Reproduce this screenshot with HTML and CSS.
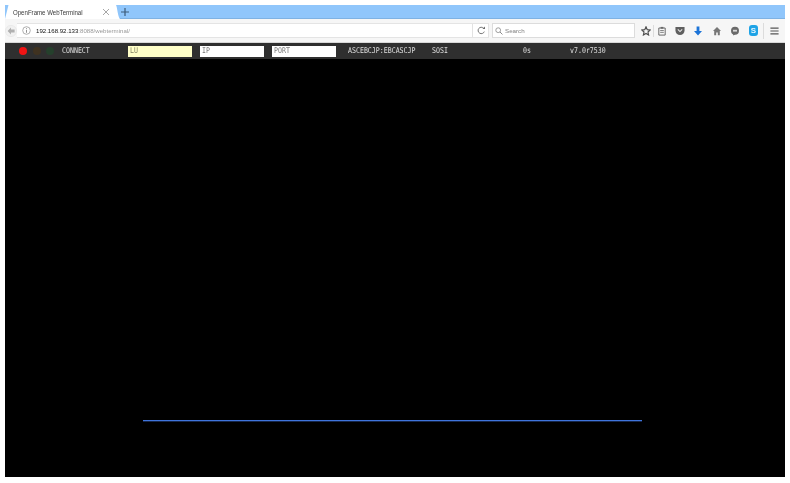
FILE: index.html
```html
<!DOCTYPE html>
<html lang="en">
<head>
<meta charset="utf-8">
<title>OpenFrame WebTerminal</title>
<link rel="stylesheet" href="styles.css">
</head>
<body>
<div class="window">
  <div class="tabbar">
    <svg class="tab-edge" width="4" height="14" viewBox="0 0 4 14"><path d="M0 14L3.5 0H0Z" fill="#90c6fb"/></svg>
    <div class="tab">
      <span class="tab-title">OpenFrame WebTerminal</span>
      <svg class="tab-close" width="8" height="8" viewBox="0 0 8 8"><path d="M1 1L7 7M7 1L1 7" stroke="#909090" stroke-width="0.8" fill="none"/></svg>
    </div>
    <svg class="tab-curve" width="5" height="14" viewBox="0 0 5 14"><path d="M0 0H1C2.5 3 2.5 11 5 14H0Z" fill="#fff"/></svg>
    <svg class="tab-new" width="8" height="8" viewBox="0 0 8 8"><path d="M4 0V8M0 4H8" stroke="#3d5a78" stroke-width="1.2" fill="none"/></svg>
  </div>
  <div class="toolbar">
    <svg class="back" width="12" height="12" viewBox="0 0 12 12"><circle cx="6" cy="6" r="5.6" fill="#f1f1f1" stroke="#e2e2e2" stroke-width="0.6"/><path d="M6 2.4L2.6 6L6 9.6V7.4H9.6V4.6H6Z" fill="#b0b0b0"/></svg>
    <div class="urlbar">
      <svg class="info" width="9" height="9" viewBox="0 0 9 9"><circle cx="4.5" cy="4.5" r="3.8" fill="none" stroke="#8c8c8c" stroke-width="0.7"/><path d="M4.5 2.2V3.1M4.5 3.9V6.8" stroke="#777" stroke-width="0.8"/></svg>
      <span class="url"><span class="url-host">192.168.92.133</span><span class="url-rest">:8088/webterminal/</span></span>
      <span class="url-divider"></span>
      <svg class="reload" width="9" height="9" viewBox="0 0 9 9"><path d="M7.3 5.6A3.2 3.2 0 1 1 6.6 2.2" fill="none" stroke="#666" stroke-width="0.9"/><path d="M5.4 3H8V0.6Z" fill="#666"/></svg>
    </div>
    <div class="searchbar">
      <svg width="8" height="8" viewBox="0 0 9 9"><circle cx="3.6" cy="3.6" r="2.7" fill="none" stroke="#888" stroke-width="0.9"/><path d="M5.6 5.6L8.4 8.4" stroke="#888" stroke-width="1.1"/></svg>
      <span class="search-text">Search</span>
    </div>
    <div class="tools">
      <svg class="tool-star" width="10" height="10" viewBox="0 0 12 12"><path d="M6 1L7.5 4.4L11 4.8L8.4 7.2L9.1 10.8L6 9L2.9 10.8L3.6 7.2L1 4.8L4.5 4.4Z" fill="none" stroke="#4f4f4f" stroke-width="1.4"/></svg>
      <span class="tool-sep"></span>
      <svg class="tool-clip" width="10" height="10" viewBox="0 0 10 11"><path d="M1.5 2.2H8.5V10H1.5Z" fill="none" stroke="#6a6a6a" stroke-width="1.1"/><path d="M3.5 1H6.5V3H3.5Z" fill="#6a6a6a"/><path d="M3 5H7M3 7H7" stroke="#6a6a6a" stroke-width="0.9"/></svg>
      <svg class="tool-pocket" width="12" height="10" viewBox="0 0 12 11"><path d="M1 1H11V5A5 5 0 0 1 1 5Z" fill="#5f5f5f"/><path d="M3.6 3.8L6 6.1L8.4 3.8" fill="none" stroke="#e8e8e8" stroke-width="1.2"/></svg>
      <svg class="tool-down" width="10" height="10" viewBox="0 0 10 10"><path d="M3.6 0.5H6.4V5H9L5 9.4L1 5H3.6Z" fill="#1c74d8"/></svg>
      <svg class="tool-home" width="10" height="10" viewBox="0 0 10 10"><path d="M5 1L9 5H7.8V9.2H5.8V6.4H4.2V9.2H2.2V5H1Z" fill="#777"/></svg>
      <svg class="tool-chat" width="10" height="10" viewBox="0 0 10 10"><circle cx="5" cy="4.8" r="4" fill="#6a6a6a"/><path d="M3 7.8L3.4 9.4L5.4 8.2Z" fill="#6a6a6a"/><path d="M3 3.8H7V5.6H3Z" fill="#d8d8d8"/></svg>
      <span class="tool-skype">S</span>
      <span class="tool-sep tool-sep-wide"></span>
      <svg class="tool-menu" width="9" height="8" viewBox="0 0 11 9"><path d="M0.5 1H10.5M0.5 4.5H10.5M0.5 8H10.5" stroke="#555" stroke-width="1.5"/></svg>
    </div>
  </div>
  <div class="termbar">
    <span class="lamp lamp-red"></span>
    <span class="lamp lamp-amber"></span>
    <span class="lamp lamp-green"></span>
    <span class="term-text connect">CONNECT</span>
    <span class="field field-lu"><span class="field-text">LU</span></span>
    <span class="field field-ip"><span class="field-text">IP</span></span>
    <span class="field field-port"><span class="field-text">PORT</span></span>
    <span class="term-text codepage">ASCEBCJP:EBCASCJP</span>
    <span class="term-text sosi">SOSI</span>
    <span class="term-text timer">0s</span>
    <span class="term-text version">v7.0r7530</span>
  </div>
  <div class="screen">
    <div class="cursor-line"></div>
  </div>
</div>
</body>
</html>
```

FILE: styles.css
```css
* { box-sizing: border-box; }
html, body { margin: 0; padding: 0; background: #fff; }
body { width: 790px; height: 483px; overflow: hidden; font-family: "Liberation Sans", Arial, sans-serif; }
.window { width: 780px; height: 472px; margin: 5px 0 0 5px; display: flex; flex-direction: column; }

.tabbar { height: 14px; background: #90c6fb; box-shadow: inset 0 -1px 0 #7fb2e3; display: flex; align-items: center; flex: none; }
.tab-edge { flex: none; background: #fff; }
.tab { width: 106px; height: 14px; background: #fff; display: flex; align-items: center; padding-left: 4px; flex: none; }
.tab-title { font-size: 7px; color: #3a3a3a; width: 89px; white-space: nowrap; transform: scaleX(0.87); transform-origin: left center; filter: blur(0.3px); }
.tab-close { flex: none; filter: blur(0.2px); }
.tab-curve { flex: none; }
.tab-new { margin-left: 1px; flex: none; filter: blur(0.2px); }

.toolbar { height: 24px; background: #f6f6f6; border-bottom: 1px solid #d8d8d8; display: flex; align-items: center; flex: none; }
.toolbar svg { filter: blur(0.3px); }
.back { flex: none; }
.urlbar { width: 472px; height: 15px; background: #fff; border: 1px solid #e4e4e4; border-left: 0; display: flex; align-items: center; padding-left: 5px; flex: none; }
.info { flex: none; }
.url { margin-left: 5px; font-size: 6.1px; width: 436px; white-space: nowrap; filter: blur(0.3px); }
.url-host { color: #111; }
.url-rest { color: #999; }
.url-divider { width: 1px; height: 13px; background: #e2e2e2; flex: none; }
.reload { margin-left: 4px; flex: none; }
.searchbar { width: 143px; height: 15px; margin-left: 3px; background: #fff; border: 1px solid #dcdcdc; display: flex; align-items: center; padding-left: 2px; flex: none; }
.search-text { margin-left: 2px; font-size: 6.2px; color: #808080; filter: blur(0.3px); }
.tools { display: flex; align-items: center; margin-left: 6px; flex: none; }
.tool-sep { width: 1px; height: 12px; background: #dcdcdc; margin-left: 2px; flex: none; }
.tool-clip { margin-left: 3px; }
.tool-pocket { margin-left: 7px; }
.tool-down { margin-left: 7px; }
.tool-home { margin-left: 9px; }
.tool-chat { margin-left: 8px; }
.tool-skype { width: 9px; height: 11px; margin-left: 9px; border-radius: 3px; background: #1ea3e6; color: #e6f6ff; font-size: 8px; font-weight: 700; line-height: 11px; text-align: center; filter: blur(0.3px); }
.tool-sep-wide { height: 16px; margin-left: 5px; }
.tool-menu { margin-left: 6px; }

.termbar { height: 16px; background: #2f2f2f; display: flex; align-items: center; flex: none; font-family: "DejaVu Sans Mono", "Liberation Mono", monospace; font-size: 6.6px; color: #e0e0e0; }
.term-text { white-space: nowrap; transform: scaleY(1.2); filter: blur(0.3px); }
.lamp { width: 8px; height: 8px; border-radius: 50%; flex: none; filter: blur(0.3px); }
.lamp-red { margin-left: 14px; background: #f01414; }
.lamp-amber { margin-left: 6px; background: #3f3220; }
.lamp-green { margin-left: 5px; background: #25402c; }
.connect { margin-left: 8px; width: 66px; }
.field { height: 11px; line-height: 11px; width: 64px; background: #fff; color: #777; padding-left: 2px; flex: none; }
.field-text { display: inline-block; transform: scaleY(1.2); filter: blur(0.3px); }
.field-lu { background: #ffffc8; color: #808060; }
.field-ip { margin-left: 8px; }
.field-port { margin-left: 8px; }
.codepage { margin-left: 12px; width: 84px; }
.sosi { width: 91px; }
.timer { width: 47px; }

.screen { flex: 1; background: #000; padding: 361px 0 0 138px; }
.cursor-line { width: 499px; height: 1px; background: #3f74dc; box-shadow: 0 0.5px 0 #2c4f96; }
```
